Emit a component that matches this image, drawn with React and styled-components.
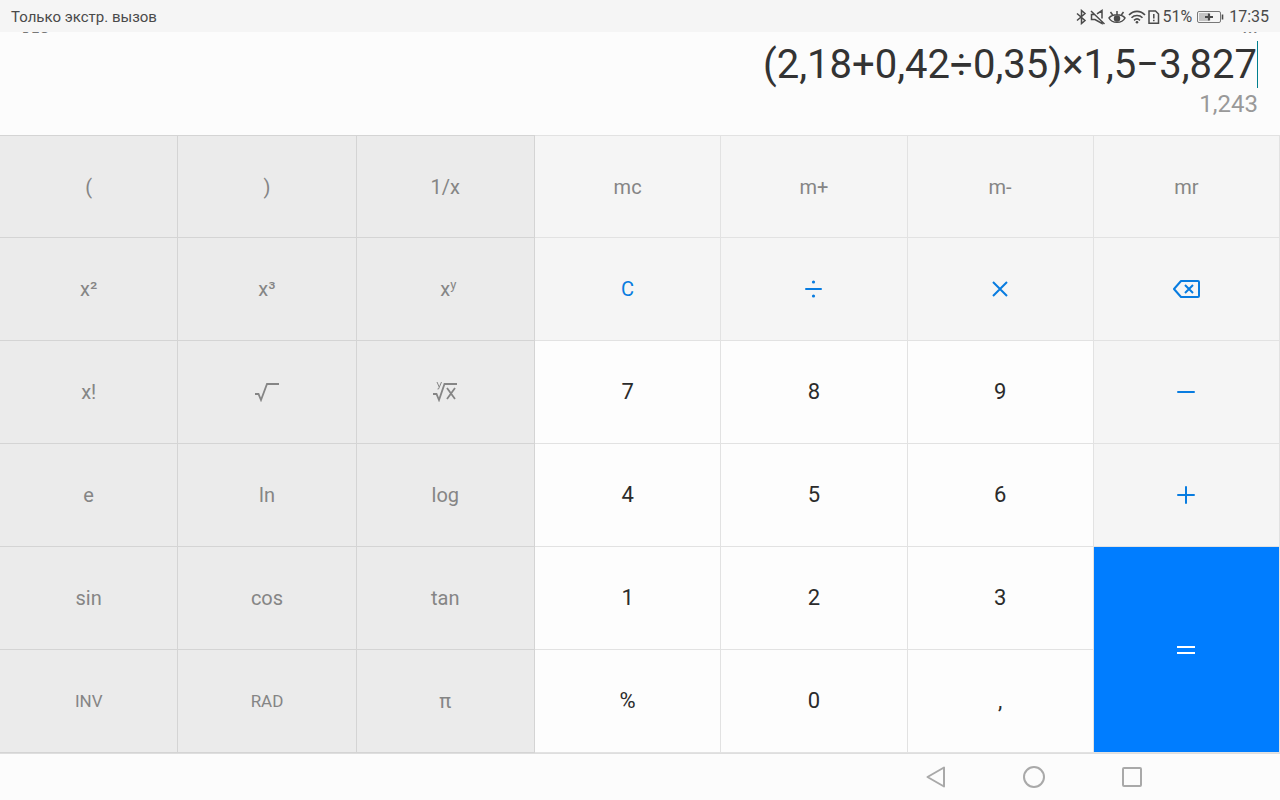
import styled, { createGlobalStyle } from "styled-components";

const GlobalStyle = createGlobalStyle`
	* {
		box-sizing: border-box;
	}
	body {
		margin: 0;
		background-color: #fcfcfc;
		font-family: Roboto, "Noto Sans", sans-serif;
	}
	button {
		font-family: inherit;
		cursor: pointer;
	}
`;

const Screen = styled.div`
	min-height: 100vh;
	display: flex;
	flex-direction: column;
`;

// status bar
const StatusBar = styled.header`
	height: 32px;
	padding: 2px 11px 0;
	display: flex;
	align-items: center;
	justify-content: space-between;
	background-color: #f5f5f5;
	color: #4a4a4a;
	font-size: 16px;
	line-height: 20px;
	white-space: nowrap;
`;

const Carrier = styled.span`
	font-size: 15px;
`;

const StatusIcons = styled.div`
	display: flex;
	align-items: center;
	gap: 2px;

	svg {
		display: block;
	}
`;

const Charge = styled.span`
	margin-right: 2px;
`;

const Clock = styled.time`
	margin-left: 3px;
`;

// expression and result
const Display = styled.section`
	height: 103px;
	padding: 0 22px;
	display: flex;
	flex-direction: column;
	overflow: hidden;
`;

// only the lower edge of this row shows under the status bar
const ModeRow = styled.div`
	height: 2px;
	display: flex;
	justify-content: space-between;
	align-items: flex-end;
	overflow: hidden;
	color: #777777;
	font-size: 14px;
	line-height: 12px;
`;

const More = styled.span`
	font-size: 20px;
	line-height: 16px;
`;

const Expression = styled.output`
	height: 62px;
	padding-top: 7px;
	display: flex;
	justify-content: flex-end;
	color: #333333;
	font-size: 40px;
	line-height: 48px;
	white-space: nowrap;
`;

const Cursor = styled.span`
	width: 1px;
	height: 47px;
	background-color: #00808f;
`;

const Result = styled.output`
	color: #999999;
	font-size: 24px;
	line-height: 16px;
	text-align: right;
`;

// keypad
const Keypad = styled.main`
	flex: 1;
	display: grid;
	grid-template-columns: 535fr 745fr;
`;

const Panel = styled.div`
	display: grid;
	grid-template-columns: repeat(${(props) => props.$columns}, 1fr);
	grid-template-rows: repeat(6, 1fr);
`;

const tones = {
	science: { back: "#ebebeb", line: "#d4d4d4", text: "#858585" },
	memory: { back: "#f5f5f5", line: "#e2e2e2", text: "#858585" },
	action: { back: "#f5f5f5", line: "#e2e2e2", text: "#087ce0" },
	digit: { back: "#fdfdfd", line: "#e2e2e2", text: "#2b2b2b" },
	equals: { back: "#007dff", line: "#e2e2e2", text: "#ffffff" },
};

const Key = styled.button`
	min-width: 0;
	padding: 0;
	display: flex;
	align-items: center;
	justify-content: center;
	grid-row: span ${(props) => props.$rows || 1};
	border: 0 solid ${(props) => tones[props.$tone].line};
	border-width: ${(props) => (props.$first ? "1px" : "0")} 1px 1px 0;
	background-color: ${(props) => tones[props.$tone].back};
	color: ${(props) => tones[props.$tone].text};
	font-size: ${(props) => props.$size || 20}px;
	line-height: 24px;

	svg {
		display: block;
	}
`;

const PowerLabel = styled.span`
	padding-left: 6px;
	display: flex;
`;

const Power = styled.sup`
	font-size: 13px;
	line-height: 16px;
	align-self: flex-start;
`;

// navigation bar
const NavBar = styled.nav`
	height: 47px;
	padding-right: 133px;
	display: flex;
	align-items: center;
	justify-content: flex-end;
	gap: 68px;
	border-top: 1px solid #dedede;
`;

const NavButton = styled.button`
	width: 30px;
	height: 30px;
	padding: 0;
	display: grid;
	place-items: center;
	border: 0;
	background: none;
	color: #a9a9a9;
`;

const Icon = ({ w, h, stroke = 2, children }) => (
	<svg
		width={w}
		height={h}
		viewBox={`0 0 ${w} ${h}`}
		fill="none"
		stroke="currentColor"
		strokeWidth={stroke}
		aria-hidden="true"
	>
		{children}
	</svg>
);

const BluetoothIcon = () => (
	<Icon w={12} h={16} stroke={1.5}>
		<path d="M1 4.5 9 11.500 5.500 14.500V1.500L9 4.500 1 11.500" />
	</Icon>
);

const MuteIcon = () => (
	<Icon w={16} h={16} stroke={1.5}>
		<path d="M1 2 14.500 15M5 5.500H1.500v5h3.500l7 4V12M7 4.800l5-3.300V9.500" />
	</Icon>
);

const EyeIcon = () => (
	<Icon w={18} h={16} stroke={1.5}>
		<path d="M1 9C4 4.500 14 4.500 17 9 14 14.800 4 14.800 1 9ZM2.500 3l2 2.800M9 2v3.500M15.500 3l-2 2.800" />
		<circle cx="9" cy="9.500" r="2.500" fill="currentColor" />
	</Icon>
);

const WifiIcon = () => (
	<Icon w={18} h={16} stroke={1.6}>
		<path d="M1 6C5.500 1.200 12.500 1.200 17 6M3.500 8.800C6.500 5.800 11.500 5.800 14.500 8.800M6 11.300C8 9.500 10 9.500 12 11.300" />
		<circle cx="9" cy="13.300" r="1.300" fill="currentColor" stroke="none" />
	</Icon>
);

const SimIcon = () => (
	<Icon w={12} h={16} stroke={1.5}>
		<path d="M1 2H7.500L10.500 5V14.200H1ZM5.800 5v4.500M5.800 10.800v1.500" />
	</Icon>
);

const BatteryIcon = () => (
	<Icon w={28} h={14} stroke={1}>
		<rect x="1.500" y="1.500" width="23" height="11" rx="1.500" stroke="#777777" />
		<rect x="3" y="3" width="10" height="8" fill="#c4c4c4" stroke="none" />
		<path d="M9 7h8M13 3.500v7" strokeWidth="2.200" />
		<path d="M26.500 4.500v5" strokeWidth="1.600" />
	</Icon>
);

const DivideIcon = () => (
	<Icon w={17} h={18}>
		<path d="M1 9h15" strokeLinecap="round" />
		<circle cx="8.500" cy="2" r="1.600" fill="currentColor" stroke="none" />
		<circle cx="8.500" cy="16" r="1.600" fill="currentColor" stroke="none" />
	</Icon>
);

const TimesIcon = () => (
	<Icon w={16} h={16}>
		<path d="M1 1 15 15M15 1 1 15" />
	</Icon>
);

const BackspaceIcon = () => (
	<Icon w={27} h={18}>
		<path d="M8 1H25Q26 1 26 2V16Q26 17 25 17H8L1 9Z" strokeLinejoin="round" />
		<path d="M12 5l8 8M20 5l-8 8" />
	</Icon>
);

const MinusIcon = () => (
	<Icon w={18} h={18}>
		<path d="M1 9h16" strokeLinecap="round" />
	</Icon>
);

const PlusIcon = () => (
	<Icon w={18} h={18}>
		<path d="M1 9h16M9 1v16" strokeLinecap="round" />
	</Icon>
);

const EqualsIcon = () => (
	<Icon w={20} h={10}>
		<path d="M1 2h18M1 8h18" />
	</Icon>
);

const RootIcon = () => (
	<Icon w={24} h={20} stroke={1.8}>
		<path d="M0 12h3.500L6 18 12 2H24" />
	</Icon>
);

const YRootIcon = () => (
	<Icon w={24} h={20} stroke={1.8}>
		<path d="M0 12h3.500L6 18 11.500 2H24" />
		<path d="M14 6l8 11M22 6l-8 11" />
		<path d="M4 0l2.200 5M8.500 0L5.500 7H4.500" strokeWidth="1" />
	</Icon>
);

const scienceKeys = [
	{ id: "(" },
	{ id: ")" },
	{ id: "1/x" },
	{ id: "x²" },
	{ id: "x³" },
	{ id: "x^y", face: <PowerLabel>x<Power>y</Power></PowerLabel> },
	{ id: "x!" },
	{ id: "sqrt", face: <RootIcon /> },
	{ id: "yroot", face: <YRootIcon /> },
	{ id: "e" },
	{ id: "ln" },
	{ id: "log" },
	{ id: "sin" },
	{ id: "cos" },
	{ id: "tan" },
	{ id: "INV", size: 17 },
	{ id: "RAD", size: 17 },
	{ id: "π" },
];

const mainKeys = [
	{ id: "mc", tone: "memory" },
	{ id: "m+", tone: "memory" },
	{ id: "m-", tone: "memory" },
	{ id: "mr", tone: "memory" },
	{ id: "C", tone: "action" },
	{ id: "divide", tone: "action", face: <DivideIcon /> },
	{ id: "multiply", tone: "action", face: <TimesIcon /> },
	{ id: "backspace", tone: "action", face: <BackspaceIcon /> },
	{ id: "7" },
	{ id: "8" },
	{ id: "9" },
	{ id: "minus", tone: "action", face: <MinusIcon /> },
	{ id: "4" },
	{ id: "5" },
	{ id: "6" },
	{ id: "plus", tone: "action", face: <PlusIcon /> },
	{ id: "1" },
	{ id: "2" },
	{ id: "3" },
	{ id: "equals", tone: "equals", rows: 2, face: <EqualsIcon /> },
	{ id: "%" },
	{ id: "0" },
	{ id: "," },
];

function Keys({ keys, columns, tone, size }) {
	return (
		<Panel $columns={columns}>
			{keys.map((key, index) => (
				<Key
					key={key.id}
					type="button"
					aria-label={key.face ? key.id : undefined}
					$tone={key.tone || tone}
					$size={key.size || (key.tone ? 20 : size)}
					$rows={key.rows}
					$first={index < columns}
				>
					{key.face || key.id}
				</Key>
			))}
		</Panel>
	);
}

function App() {
	return (
		<Screen>
			<GlobalStyle />
			<StatusBar>
				<Carrier>Только экстр. вызов</Carrier>
				<StatusIcons>
					<BluetoothIcon />
					<MuteIcon />
					<EyeIcon />
					<WifiIcon />
					<SimIcon />
					<Charge>51%</Charge>
					<BatteryIcon />
					<Clock>17:35</Clock>
				</StatusIcons>
			</StatusBar>
			<Display>
				<ModeRow>
					<span>DEG</span>
					<More>...</More>
				</ModeRow>
				<Expression>
					(2,18+0,42÷0,35)×1,5−3,827
					<Cursor />
				</Expression>
				<Result>1,243</Result>
			</Display>
			<Keypad>
				<Keys keys={scienceKeys} columns={3} tone="science" size={20} />
				<Keys keys={mainKeys} columns={4} tone="digit" size={22} />
			</Keypad>
			<NavBar>
				<NavButton type="button" aria-label="Back">
					<Icon w={20} h={22}>
						<path d="M18 1.500V20.500L1.500 11Z" strokeLinejoin="round" />
					</Icon>
				</NavButton>
				<NavButton type="button" aria-label="Home">
					<Icon w={22} h={22}>
						<circle cx="11" cy="11" r="10" />
					</Icon>
				</NavButton>
				<NavButton type="button" aria-label="Recent apps">
					<Icon w={20} h={20}>
						<rect x="1" y="1" width="18" height="18" rx="1" />
					</Icon>
				</NavButton>
			</NavBar>
		</Screen>
	);
}

export default App;
